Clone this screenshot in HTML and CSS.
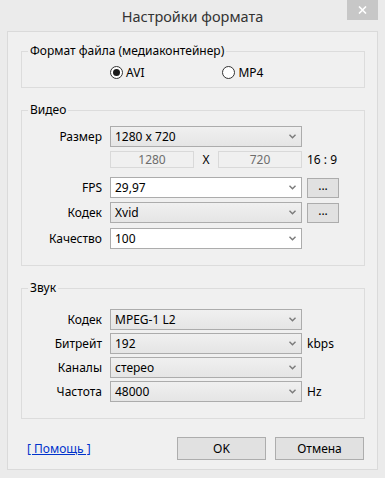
FILE: index.html
```html
<!DOCTYPE html>
<html lang="ru">
<head>
<meta charset="utf-8">
<title>Настройки формата</title>
<link rel="stylesheet" href="styles.css">
</head>
<body>
<div class="window">
  <div class="titlebar">
    <div class="title">Настройки формата</div>
    <div class="close"><svg width="9" height="8" viewBox="0 0 9 8"><path d="M1 0.5L8 7.5M8 0.5L1 7.5" stroke="#fff" stroke-width="1.6"/></svg></div>
  </div>
  <div class="client">
    <fieldset class="group g-format">
      <legend>Формат файла (медиаконтейнер)</legend>
      <div class="radios">
        <label class="radio r-avi"><span class="rb checked"></span>AVI</label>
        <label class="radio r-mp4"><span class="rb"></span>MP4</label>
      </div>
    </fieldset>

    <fieldset class="group g-video">
      <legend>Видео</legend>
      <div class="row r-size">
        <span class="lbl">Размер</span>
        <div class="combo ro"><span>1280 x 720</span><svg class="chev" width="7" height="5" viewBox="0 0 7 5"><path d="M0.5 0.8L3.5 3.8L6.5 0.8" fill="none" stroke="#7a7a7a" stroke-width="1.4"/></svg></div>
      </div>
      <div class="row r-dims">
        <span class="lbl"></span>
        <div class="dims">
          <div class="num">1280</div>
          <span class="x">X</span>
          <div class="num">720</div>
        </div>
        <span class="unit">16 : 9</span>
      </div>
      <div class="row r-fps">
        <span class="lbl">FPS</span>
        <div class="combo"><span>29,97</span><svg class="chev" width="7" height="5" viewBox="0 0 7 5"><path d="M0.5 0.8L3.5 3.8L6.5 0.8" fill="none" stroke="#7a7a7a" stroke-width="1.4"/></svg></div>
        <div class="btn-dots">...</div>
      </div>
      <div class="row r-vcodec">
        <span class="lbl">Кодек</span>
        <div class="combo ro"><span>Xvid</span><svg class="chev" width="7" height="5" viewBox="0 0 7 5"><path d="M0.5 0.8L3.5 3.8L6.5 0.8" fill="none" stroke="#7a7a7a" stroke-width="1.4"/></svg></div>
        <div class="btn-dots">...</div>
      </div>
      <div class="row r-quality">
        <span class="lbl">Качество</span>
        <div class="combo"><span>100</span><svg class="chev" width="7" height="5" viewBox="0 0 7 5"><path d="M0.5 0.8L3.5 3.8L6.5 0.8" fill="none" stroke="#7a7a7a" stroke-width="1.4"/></svg></div>
      </div>
    </fieldset>

    <fieldset class="group g-audio">
      <legend>Звук</legend>
      <div class="row r-acodec">
        <span class="lbl">Кодек</span>
        <div class="combo ro"><span>MPEG-1 L2</span><svg class="chev" width="7" height="5" viewBox="0 0 7 5"><path d="M0.5 0.8L3.5 3.8L6.5 0.8" fill="none" stroke="#7a7a7a" stroke-width="1.4"/></svg></div>
      </div>
      <div class="row r-arow">
        <span class="lbl">Битрейт</span>
        <div class="combo ro"><span>192</span><svg class="chev" width="7" height="5" viewBox="0 0 7 5"><path d="M0.5 0.8L3.5 3.8L6.5 0.8" fill="none" stroke="#7a7a7a" stroke-width="1.4"/></svg></div>
        <span class="unit">kbps</span>
      </div>
      <div class="row r-arow">
        <span class="lbl">Каналы</span>
        <div class="combo ro"><span>стерео</span><svg class="chev" width="7" height="5" viewBox="0 0 7 5"><path d="M0.5 0.8L3.5 3.8L6.5 0.8" fill="none" stroke="#7a7a7a" stroke-width="1.4"/></svg></div>
      </div>
      <div class="row r-arow">
        <span class="lbl">Частота</span>
        <div class="combo ro"><span>48000</span><svg class="chev" width="7" height="5" viewBox="0 0 7 5"><path d="M0.5 0.8L3.5 3.8L6.5 0.8" fill="none" stroke="#7a7a7a" stroke-width="1.4"/></svg></div>
        <span class="unit">Hz</span>
      </div>
    </fieldset>

    <div class="footer">
      <a class="help" href="#">[ Помощь ]</a>
      <div class="buttons">
        <div class="btn">OK</div>
        <div class="btn">Отмена</div>
      </div>
    </div>
  </div>
</div>
</body>
</html>
```
FILE: styles.css
```css
* { box-sizing: border-box; }
html, body { margin: 0; padding: 0; }
body {
  background: #ebebeb;
  font-family: "Noto Sans", "Open Sans", sans-serif;
  font-size: 12px;
  color: #000;
}
.window {
  width: 385px;
  height: 478px;
  background: #ebebeb;
  display: flex;
  flex-direction: column;
}
.titlebar {
  height: 31px;
  display: grid;
  grid-template-columns: 1fr auto 1fr;
  align-items: start;
}
.title {
  grid-column: 2;
  font-size: 14.5px;
  color: #333;
  line-height: 20px;
  padding-top: 6px;
}
.close {
  grid-column: 3;
  justify-self: end;
  margin-right: 7px;
  width: 31px;
  height: 20px;
  background: #c7c7c7;
  display: flex;
  align-items: center;
  justify-content: center;
}
.client {
  margin: 0 7px;
  height: 439px;
  background: #f0f0f0;
  border: 1px solid #dadada;
  padding: 0 12px 0 13px;
}
.group {
  margin: 0;
  padding: 0;
  border: 1px solid #dcdcdc;
  min-width: 0;
}
.group legend {
  padding: 0 2px;
  margin-left: 6px;
  line-height: 16px;
  height: 16px;
}
.g-format { margin-top: 11px; padding-bottom: 5px; }
.radios {
  display: flex;
  margin-top: 3px;
  height: 20px;
  align-items: center;
}
.radio {
  display: flex;
  align-items: center;
}
.r-avi { margin-left: 88px; }
.r-mp4 { margin-left: 78px; }
.rb {
  width: 13px;
  height: 13px;
  border: 1px solid #333;
  border-radius: 50%;
  background: #fff;
  margin-right: 3px;
  display: flex;
  align-items: center;
  justify-content: center;
}
.rb.checked::after {
  content: "";
  width: 7px;
  height: 7px;
  border-radius: 50%;
  background: #1a1a1a;
}

.g-video { margin-top: 14px; padding-bottom: 16px; }
.g-audio { margin-top: 14px; padding-bottom: 16px; }
.row {
  display: flex;
  align-items: center;
}
.lbl {
  width: 80px;
  text-align: right;
  margin-right: 8px;
  flex: none;
}
.combo {
  width: 192px;
  height: 21px;
  border: 1px solid #acacac;
  background: #fff;
  display: flex;
  align-items: center;
  justify-content: space-between;
  padding: 0 5px 0 4px;
  flex: none;
}
.combo.ro {
  background: linear-gradient(#f0f0f0, #e5e5e5);
}
.chev { flex: none; }
.unit { margin-left: 5px; }
.btn-dots {
  width: 32px;
  height: 20px;
  margin-left: 5px;
  border: 1px solid #acacac;
  background: #e1e1e1;
  display: flex;
  align-items: center;
  justify-content: center;
  line-height: 1;
  padding-bottom: 3px;
}
.r-size { margin-top: 8px; }
.r-dims { margin-top: 4px; height: 17px; }
.dims {
  width: 192px;
  display: flex;
  align-items: center;
  flex: none;
}
.num {
  width: 84px;
  height: 17px;
  border: 1px solid #d9d9d9;
  background: #f0f0f0;
  color: #6d6d6d;
  text-align: center;
  line-height: 15px;
}
.dims .x {
  width: 24px;
  text-align: center;
}
.r-fps { margin-top: 9px; }
.r-vcodec { margin-top: 4px; }
.r-quality { margin-top: 5px; }

.r-acodec { margin-top: 13px; }
.r-arow { margin-top: 3px; }

.footer {
  margin-top: 18px;
  display: flex;
  align-items: center;
  justify-content: space-between;
  height: 23px;
}
.help {
  margin-left: 6px;
  color: #0033cc;
  text-decoration: underline;
}
.buttons {
  display: flex;
  gap: 9px;
  margin-right: 1px;
}
.btn {
  width: 89px;
  height: 23px;
  border: 1px solid #adadad;
  background: #e1e1e1;
  display: flex;
  align-items: center;
  justify-content: center;
}
```
